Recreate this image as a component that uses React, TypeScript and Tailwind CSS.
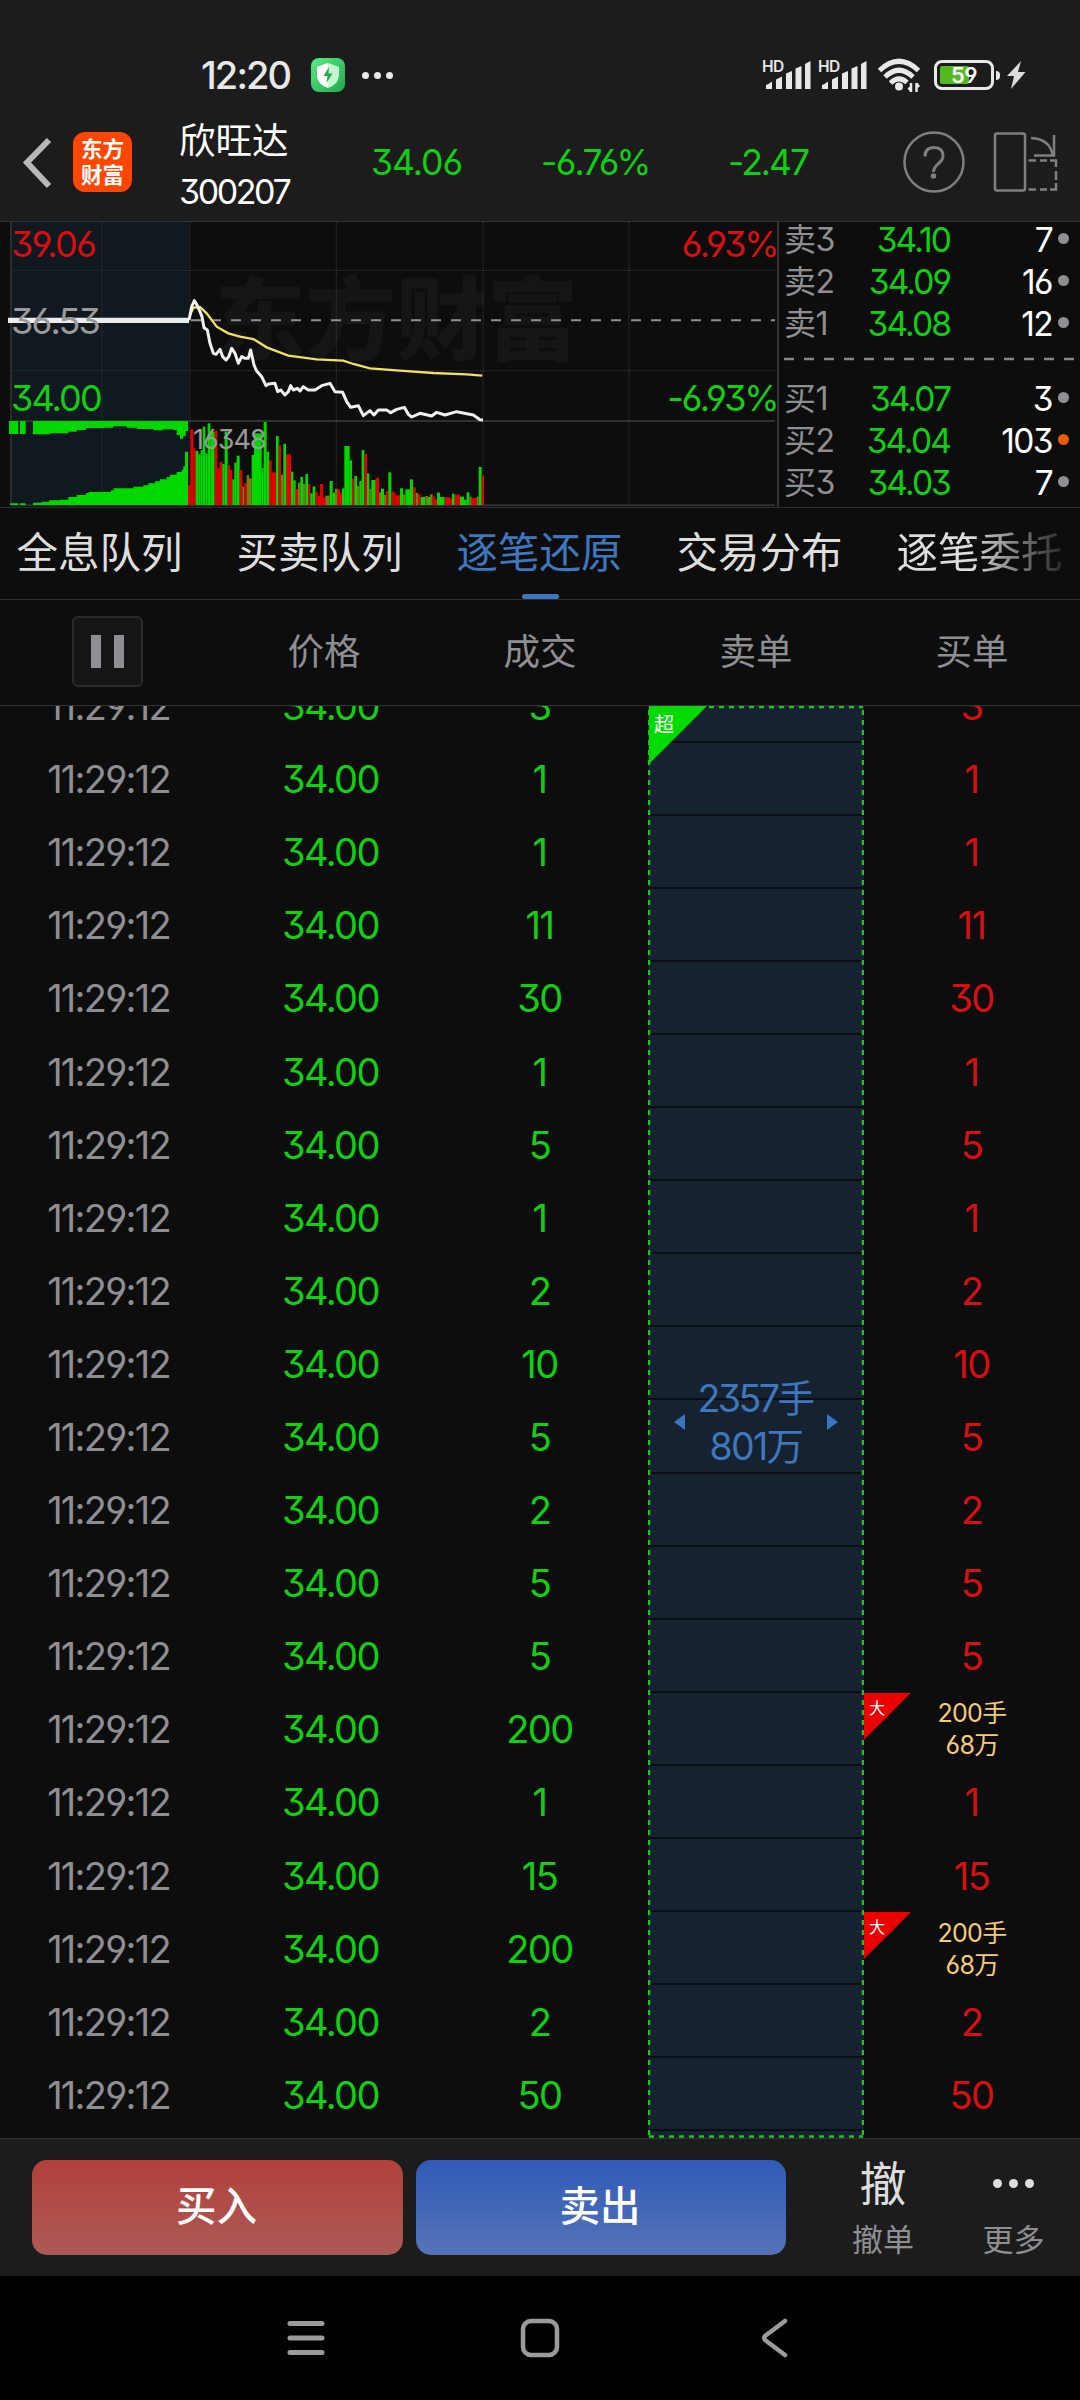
import type { ReactNode } from 'react';

type Quote = { label: string; price: string; volume: string; hot?: boolean };
type Trade = { volume: string; big?: boolean };

const asks: Quote[] = [
  { label: '卖3', price: '34.10', volume: '7' },
  { label: '卖2', price: '34.09', volume: '16' },
  { label: '卖1', price: '34.08', volume: '12' },
];

const bids: Quote[] = [
  { label: '买1', price: '34.07', volume: '3' },
  { label: '买2', price: '34.04', volume: '103', hot: true },
  { label: '买3', price: '34.03', volume: '7' },
];

const tabs = ['全息队列', '买卖队列', '逐笔还原', '交易分布', '逐笔委托'];

const trades: Trade[] = [
  { volume: '3' }, { volume: '1' }, { volume: '1' }, { volume: '11' }, { volume: '30' },
  { volume: '1' }, { volume: '5' }, { volume: '1' }, { volume: '2' }, { volume: '10' },
  { volume: '5' }, { volume: '2' }, { volume: '5' }, { volume: '5' }, { volume: '200', big: true },
  { volume: '1' }, { volume: '15' }, { volume: '200', big: true }, { volume: '2' }, { volume: '50' },
];

// Volume bars: [left, right, top, colour], colour g = up, r = down, b = mixed.
const bars: [number, number, number, 'g' | 'r' | 'b'][] = [
  [564, 571, 810, 'r'], [571, 580, 643, 'r'], [580, 587, 700, 'r'], [587, 595, 708, 'g'], [595, 602, 718, 'g'],
  [602, 608, 705, 'g'], [608, 616, 635, 'g'], [616, 623, 715, 'g'], [623, 631, 625, 'g'], [631, 644, 650, 'g'],
  [644, 652, 647, 'r'], [652, 659, 759, 'r'], [659, 667, 741, 'r'], [667, 674, 747, 'g'], [674, 683, 650, 'g'],
  [683, 690, 750, 'r'], [690, 697, 765, 'r'], [697, 703, 793, 'g'], [703, 710, 743, 'g'], [710, 719, 722, 'g'],
  [719, 727, 765, 'r'], [727, 733, 815, 'b'], [733, 740, 803, 'r'], [740, 747, 780, 'b'], [747, 755, 790, 'b'],
  [755, 762, 720, 'g'], [762, 785, 655, 'g'], [785, 791, 759, 'g'], [791, 800, 621, 'g'], [800, 807, 710, 'g'],
  [807, 815, 736, 'r'], [815, 828, 772, 'r'], [828, 836, 663, 'g'], [836, 843, 691, 'r'], [843, 850, 779, 'b'],
  [850, 858, 686, 'g'], [858, 873, 718, 'r'], [873, 880, 770, 'g'], [880, 887, 796, 'g'], [887, 894, 822, 'r'],
  [894, 901, 803, 'b'], [901, 909, 786, 'g'], [909, 916, 807, 'b'], [916, 924, 777, 'g'], [924, 931, 807, 'r'],
  [931, 938, 835, 'g'], [938, 946, 814, 'g'], [946, 953, 830, 'r'], [953, 960, 843, 'r'], [960, 969, 807, 'r'],
  [969, 976, 847, 'r'], [976, 989, 842, 'b'], [989, 998, 798, 'g'], [998, 1005, 833, 'g'], [1005, 1013, 821, 'b'],
  [1013, 1020, 823, 'r'], [1020, 1026, 835, 'r'], [1026, 1033, 820, 'g'], [1033, 1049, 693, 'g'], [1049, 1056, 736, 'g'],
  [1056, 1063, 791, 'r'], [1063, 1071, 783, 'g'], [1071, 1078, 813, 'b'], [1078, 1085, 798, 'g'], [1085, 1093, 705, 'g'],
  [1093, 1101, 717, 'r'], [1101, 1108, 775, 'g'], [1108, 1114, 821, 'b'], [1114, 1127, 795, 'g'], [1127, 1137, 788, 'r'],
  [1137, 1143, 832, 'b'], [1143, 1152, 821, 'g'], [1152, 1158, 840, 'b'], [1158, 1165, 828, 'r'], [1165, 1174, 772, 'g'],
  [1174, 1180, 828, 'r'], [1180, 1187, 833, 'r'], [1187, 1200, 841, 'r'], [1200, 1209, 820, 'g'], [1209, 1216, 838, 'b'],
  [1216, 1230, 823, 'g'], [1230, 1239, 793, 'g'], [1239, 1247, 817, 'r'], [1247, 1254, 834, 'b'], [1254, 1262, 838, 'r'],
  [1262, 1276, 846, 'g'], [1276, 1284, 843, 'b'], [1284, 1290, 846, 'g'], [1290, 1298, 838, 'b'], [1298, 1305, 844, 'r'],
  [1305, 1311, 853, 'r'], [1311, 1320, 833, 'g'], [1320, 1334, 846, 'g'], [1334, 1352, 847, 'r'], [1352, 1356, 851, 'r'],
  [1356, 1364, 836, 'g'], [1364, 1380, 839, 'r'], [1380, 1392, 845, 'g'], [1392, 1400, 854, 'g'], [1400, 1408, 832, 'g'],
  [1408, 1415, 845, 'b'], [1415, 1430, 849, 'r'], [1430, 1436, 845, 'b'], [1436, 1445, 756, 'g'], [1445, 1452, 781, 'r'],
];

const barFill = { g: '#00d800', r: '#e60000', b: '#7d7a10' };

function Signal() {
  return (
    <svg className="h-[32px] w-[47px] overflow-visible" viewBox="0 0 47 32" fill="#e8e8e8">
      <text x="-2" y="13" fontSize="15.5" fontWeight="600" letterSpacing="-0.6" fontFamily="Inter, sans-serif">HD</text>
      <path d="M2 30V26Q5 25 8 22.500V30ZM12 30V20.500L18 17.500V30ZM22 30V14.500L28 12V30ZM31.500 30V9.500L37.500 7V30ZM41 30V5L46.500 2V30Z" />
    </svg>
  );
}

function StatusBar() {
  return (
    <div className="flex h-[106px] items-end pr-[54px] pb-[14px] pl-[201px]">
      <span className="w-[110px] text-[38px] leading-[34px] font-medium tracking-[-1.900px] text-[#e8e8e8]">12:20</span>
      <svg className="h-[34px] w-[34px]" viewBox="0 0 34 34">
        <defs>
          <linearGradient id="shield" x1="0" y1="0" x2="1" y2="1">
            <stop offset="0" stopColor="#58ec84" />
            <stop offset="1" stopColor="#1fa850" />
          </linearGradient>
        </defs>
        <rect width="34" height="34" rx="8" fill="url(#shield)" />
        <path d="M17 5 28 9V17Q28 26 17 30Q6 26 6 17V9Z" fill="#c3f7d1" />
        <path d="M17 5 6 9V17Q6 26 17 30Z" fill="#fff" />
        <path d="M18 9 12.500 18H16.500L15.500 25 21.500 15.500H17.500Z" fill="#22a84f" />
      </svg>
      <div className="ml-[17px] flex h-[34px] items-center gap-[5px]">
        <i className="size-[7px] rounded-full bg-[#e8e8e8]" />
        <i className="size-[7px] rounded-full bg-[#e8e8e8]" />
        <i className="size-[7px] rounded-full bg-[#e8e8e8]" />
      </div>
      <div className="ml-auto flex h-[34px] items-center">
        <Signal />
        <span className="w-[9px]" />
        <Signal />
        <svg className="ml-[10px] h-[34px] w-[46px]" viewBox="0 0 46 34" fill="none" stroke="#e8e8e8" strokeWidth="5">
          <path d="M2.500 12.500Q22 -6 41.500 12.500" />
          <path d="M8 19Q22 5.500 36 19" />
          <path d="M13.500 25Q22 17 30 24.500" />
          <circle cx="22" cy="28.500" r="4" fill="#e8e8e8" stroke="none" />
          <path d="M34 25V34M39.500 25V34M31.500 29.500 34 33M42 29 39.500 25.500" strokeWidth="2.500" />
        </svg>
        <div className="ml-[11px] flex h-[30px] w-[60px] items-center justify-center rounded-[8px] border-[3px] border-[#e8e8e8]">
          <div className="relative h-[18px] w-[48px]">
            <div className="h-[18px] w-[29px] rounded-[2px] bg-[#55b81c]" />
            <span className="absolute inset-0 text-center text-[22px] leading-[18px] font-semibold tracking-[-0.500px] text-white">59</span>
          </div>
        </div>
        <span className="ml-[2px] h-[9px] w-[4px] rounded-r bg-[#e8e8e8]" />
        <svg className="ml-[7px] h-[30px] w-[19px]" viewBox="0 0 19 30" fill="#dcdcdc">
          <path d="M14 1 0 16H7L4 29 18.500 12H11Z" />
        </svg>
      </div>
    </div>
  );
}

function StockHeader() {
  return (
    <div className="flex h-[116px] items-center border-b-1 border-[#333] text-[35.500px] text-[#12cf12]">
      <svg className="ml-[22px] h-[54px] w-[31px]" viewBox="0 0 31 54" fill="none" stroke="#b8b8b8" strokeWidth="6" strokeLinecap="butt">
        <path d="M27 3 5 25.500 27 49" />
      </svg>
      <div className="-mt-[4px] ml-[20px] flex h-[60px] w-[59px] flex-col items-center justify-center rounded-[12px] bg-[#ff4600] text-[21.500px] leading-[26px] font-bold text-white">
        <span>东方</span>
        <span>财富</span>
      </div>
      <div className="mt-[6px] ml-[47px] flex w-[192px] flex-col text-white">
        <span className="text-[36.500px] leading-[50px]">欣旺达</span>
        <span className="text-[34px] leading-[51px] tracking-[-2.400px]">300207</span>
      </div>
      <span className="-mt-[2px] w-[170px] tracking-[-1px]">34.06</span>
      <span className="-mt-[2px] w-[187px] tracking-[-1.700px]">-6.76%</span>
      <span className="-mt-[2px] w-[175px] tracking-[-2px]">-2.47</span>
      <svg className="-mt-[3px] h-[62px] w-[62px]" viewBox="0 0 62 62" fill="none" stroke="#7f7f7f" strokeWidth="2.500">
        <circle cx="31" cy="31" r="29.500" />
        <path d="M22 25.500Q22 16.500 31 16.500Q40 16.500 40 25Q40 29 35 33Q30.500 37 30.500 41" strokeWidth="3" />
        <circle cx="30.500" cy="45" r="2.800" fill="#7f7f7f" stroke="none" />
      </svg>
      <svg className="-mt-[3px] ml-[28px] h-[62px] w-[66px]" viewBox="0 0 66 62" fill="none" stroke="#7f7f7f" strokeWidth="2.500">
        <rect x="2" y="2.500" width="30" height="57" rx="2" />
        <path d="M38 7Q57 8 59.500 24M61 4V24.500H41" />
        <path d="M35.500 29.500H43M47 29.500H54M57 29.500H63V36M63 40V49M63 52V58.500H57M54 58.500H47M43 58.500H35.500" />
      </svg>
    </div>
  );
}

function Chart() {
  return (
    <div className="relative h-[285px] w-[777px]">
      <svg className="h-[285px] w-[777px]" viewBox="0 21 2331 855" fill="none">
        <rect x="36" y="21" width="532" height="849" fill="#101820" />
        <text x="643" y="415" fontSize="273" fontWeight="900" fontFamily="'Noto Sans CJK SC', sans-serif" textLength="1092" fill="#151515">东方财富</text>
        <path d="M33 166H2325M33 467H2325M306 21V870M570 21V870M1009 21V870M1449 21V870M1887 21V870" stroke="#303030" strokeWidth="4" strokeDasharray="4 4" />
        <path d="M33 21V870" stroke="#2c2c2c" strokeWidth="6" />
        <path d="M33 618H2325M33 871H2325" stroke="#303030" strokeWidth="6" />
        <path d="M573 316H2325" stroke="#909090" strokeWidth="6" strokeDasharray="30 30" />
        <path d="M27 618H55V657H27ZM60 618H77V657H60ZM99 618V658H150V655H205V650H230V645H258V639H315V638H340V634H380V638H410V642H460V646H490V643H520V645H530V660H540V671H549V664H557V648H564V618Z" fill="#00d800" />
        <path d="M30 865H55V870H30ZM60 865H77V870H60ZM99 870V863H125V860H148V856H180V854H205V846H230V840H258V834H266V831H333V826H341V820H400V815H430V811H445V805H465V799H480V793H500V786H510V779H530V771H545V764H550V754H555V710H564V870Z" fill="#00d800" />
        {bars.map(([left, right, top, tone]) => (
          <rect key={left} x={left} y={top} width={right - left} height={870 - top} fill={barFill[tone]} />
        ))}
        <path d="M570 300 580 278 600 276 620 295 650 335 685 355 720 365 760 372 800 397 865 422 950 433 1030 437 1060 447 1110 460 1200 467 1300 474 1400 478 1447 482" stroke="#f0e060" strokeWidth="7" />
        <path d="M24 316H567" stroke="#ececec" strokeWidth="16" />
        <path d="M567 316 575 275 583 257 590 268 600 290 606 305 612 338 622 345 630 385 640 415 648 418 660 403 668 425 678 435 686 425 695 400 705 415 715 445 725 425 735 430 745 430 752 405 762 450 770 468 785 485 798 512 805 507 825 505 833 530 842 525 855 540 865 530 872 512 880 525 892 520 900 528 910 515 925 525 945 525 965 512 990 505 1005 530 1028 532 1040 560 1052 577 1075 572 1090 602 1110 587 1122 600 1135 585 1160 585 1172 593 1190 583 1213 577 1225 598 1235 606 1260 595 1295 603 1310 592 1335 600 1370 590 1420 600 1440 614 1449 615" stroke="#f0f0f0" strokeWidth="9" strokeLinejoin="round" />
      </svg>
      <div className="absolute inset-0 text-[36px] leading-[40px]">
        <div className="flex h-[78px] justify-between pt-[2px] pl-[11px] text-[#d80f0f]">
          <span className="tracking-[-1.700px]">39.06</span>
          <span className="tracking-[-2.500px]">6.93%</span>
        </div>
        <div className="flex h-[77px] pt-[1px] pl-[11px] text-[#999999]">
          <span className="tracking-[-1.900px]">36.53</span>
        </div>
        <div className="flex h-[48px] justify-between pt-[1px] pl-[11px] text-[#12cf12]">
          <span className="tracking-[-1.900px]">34.00</span>
          <span className="tracking-[-2.500px]">-6.93%</span>
        </div>
        <div className="pl-[193px] text-[27px] leading-[30px] tracking-[-1px] text-[#9a9a9a]">16348</div>
      </div>
    </div>
  );
}

function QuoteRow({ label, price, volume, hot }: Quote) {
  return (
    <div className="flex h-[42px] items-center pr-[11px] pl-[5px] text-[33.500px]">
      <span className="w-[70px] text-[32px] tracking-[-0.500px] text-[#8e8e93]">{label}</span>
      <span className="w-[96px] text-right tracking-[-1.900px] text-[#12cf12]">{price}</span>
      <span className="flex-1 text-right tracking-[-1.600px] text-white">{volume}</span>
      <i className={hot ? 'mb-[3px] ml-[6px] size-[11px] rounded-full bg-[#e65c08]' : 'mb-[3px] ml-[6px] size-[11px] rounded-full bg-[#8e8e93]'} />
    </div>
  );
}

function OrderBook() {
  return (
    <div className="flex h-[285px] flex-1 flex-col border-l-2 border-[#333]">
      <div className="-mt-[3px]">
        {asks.map((q) => <QuoteRow key={q.label} {...q} />)}
      </div>
      <svg className="mt-[12px] mb-[17px] ml-[5px] h-[4px] w-[292px]" viewBox="0 0 292 4">
        <path d="M0 2H292" stroke="#858585" strokeWidth="2.500" strokeDasharray="10 10" />
      </svg>
      {bids.map((q) => <QuoteRow key={q.label} {...q} />)}
    </div>
  );
}

function Tabs() {
  return (
    <div className="flex h-[93px] justify-center overflow-hidden border-y-1 border-[#2d2d2d] text-[41.500px] text-[#dedede]">
      {tabs.map((tab, i) => (
        <div key={tab} className="relative flex w-[220px] shrink-0 items-center justify-center">
          {i === 2 && <span className="-ml-[1px] text-[#3d77bd]">{tab}</span>}
          {i === 4 && <span className="-ml-[1px] bg-linear-to-r from-[#dedede] from-45% to-[#2a2a2a] bg-clip-text text-transparent">{tab}</span>}
          {i !== 2 && i !== 4 && <span className="-ml-[1px]">{tab}</span>}
          {i === 2 && <i className="absolute bottom-0 h-[5px] w-[37px] rounded-full bg-[#3d77bd]" />}
        </div>
      ))}
    </div>
  );
}

function TableHead() {
  return (
    <div className="grid h-[106px] grid-cols-5 items-center justify-items-center border-b-1 border-[#333] text-[36.500px] text-[#8e8e93]">
      <div className="-mt-[2px] mr-[2px] flex h-[71px] w-[71px] items-center justify-center gap-[13px] rounded-[6px] border-2 border-[#2a2a2a] bg-[#151515]">
        <i className="h-[33px] w-[10px] bg-[#8e8e93]" />
        <i className="h-[33px] w-[10px] bg-[#8e8e93]" />
      </div>
      <span>价格</span>
      <span>成交</span>
      <span>卖单</span>
      <span>买单</span>
    </div>
  );
}

function CornerMark({ children }: { children: ReactNode }) {
  return (
    <div className="absolute top-0 left-0 h-[47px] w-[47px] bg-[#ec0000] pt-[6px] pl-[5px] text-[16px] leading-[18px] text-white [clip-path:polygon(0_0,100%_0,0_100%)]">
      {children}
    </div>
  );
}

function TradeRow({ volume, big }: Trade) {
  return (
    <div className="grid h-[73.100px] shrink-0 grid-cols-5 items-center justify-items-center">
      <span className="pl-[1px] tracking-[-1.750px] text-[#8e8e93]">11:29:12</span>
      <span className="pl-[13px] tracking-[-1.600px] text-[#12cf12]">34.00</span>
      <span className="pr-[1px] tracking-[-1.500px] text-[#12cf12]">{volume}</span>
      <div className="h-full w-full border-b-2 border-[#0a0f14] bg-[#162230]" />
      <div className="relative flex h-full w-full flex-col items-center justify-center">
        {big ? (
          <>
            <CornerMark>大</CornerMark>
            <span className="text-[25px] leading-[32px] tracking-[-0.700px] text-[#f6cb78]">{volume}手</span>
            <span className="text-[25px] leading-[32px] tracking-[-0.700px] text-[#f6cb78]">68万</span>
          </>
        ) : (
          <span className="pr-[1px] tracking-[-1.500px] text-[#d80f0f]">{volume}</span>
        )}
      </div>
    </div>
  );
}

function SellOrderOverlay() {
  return (
    <div className="absolute top-0 left-[648px] h-[1432px] w-[216px]">
      <div className="absolute top-0 left-[1px] h-[58px] w-[58px] bg-[#00dc00] pt-[8px] pl-[5px] text-[20px] leading-[22px] text-white [clip-path:polygon(0_0,100%_0,0_100%)]">超</div>
      <svg className="absolute inset-0 h-[1432px] w-[216px]" viewBox="0 0 216 1432" fill="none" stroke="#1fc41f" strokeWidth="2.500" strokeDasharray="5 5">
        <path d="M1 1H215M1 4V1430M215 4V1430M1 1430.500H215" />
      </svg>
      <div className="flex h-full flex-col items-center pt-[669px] text-[37.500px] leading-[48px] text-[#3d77bd]">
        <span className="pr-[2px] tracking-[-2.500px]">2357手</span>
        <span className="tracking-[-1.700px]">801万</span>
      </div>
      <svg className="absolute top-[707px] left-[26px] h-[18px] w-[164px]" viewBox="0 0 164 18" fill="#3876c4">
        <path d="M0 9 11 1V17ZM164 9 153 1V17Z" />
      </svg>
    </div>
  );
}

function TradeList() {
  return (
    <div className="relative flex h-[1432px] flex-col overflow-hidden text-[38px] leading-[48px]">
      <div className="-mt-[36.500px] flex flex-col">
        {trades.map((t, i) => <TradeRow key={i} {...t} />)}
        <div className="ml-[648px] h-[10px] w-[216px] bg-[#162230]" />
      </div>
      <SellOrderOverlay />
    </div>
  );
}

function ActionBar() {
  return (
    <div className="flex h-[138px] items-center border-t-1 border-[#333] bg-[#1c1c1c] pl-[32px] text-[40.500px] text-[#dedede]">
      <button className="h-[95px] w-[371px] rounded-[15px] bg-linear-to-b from-[#b1403b] to-[#ac5955] pr-[2px] font-medium text-white">买入</button>
      <button className="ml-[13px] h-[95px] w-[370px] rounded-[15px] bg-linear-to-b from-[#2f5ab6] to-[#5573b8] pr-[2px] font-medium text-white">卖出</button>
      <div className="mt-[5px] ml-[32px] flex w-[130px] flex-col items-center">
        <span className="text-[47px] leading-[50px] font-normal">撤</span>
        <span className="mt-[9px] text-[31px] leading-[44px] text-[#8e8e93]">撤单</span>
      </div>
      <div className="mt-[5px] flex w-[131px] flex-col items-center">
        <div className="flex h-[50px] items-center gap-[7px]">
          <i className="size-[9px] rounded-full bg-[#dedede]" />
          <i className="size-[9px] rounded-full bg-[#dedede]" />
          <i className="size-[9px] rounded-full bg-[#dedede]" />
        </div>
        <span className="mt-[9px] text-[31px] leading-[44px] text-[#8e8e93]">更多</span>
      </div>
    </div>
  );
}

function NavBar() {
  return (
    <div className="flex h-[124px] items-center justify-center gap-[195px] bg-black">
      <svg className="h-[40px] w-[38px]" viewBox="0 0 38 40" fill="none" stroke="#9b9b9b" strokeWidth="5" strokeLinecap="round">
        <path d="M3 5.500H35M3 20H35M3 34.500H35" />
      </svg>
      <svg className="h-[40px] w-[40px]" viewBox="0 0 40 40" fill="none" stroke="#9b9b9b" strokeWidth="4.500">
        <rect x="3" y="3" width="34" height="34" rx="8" />
      </svg>
      <svg className="h-[40px] w-[38px]" viewBox="0 0 38 40" fill="none" stroke="#9b9b9b" strokeWidth="4.500" strokeLinecap="round" strokeLinejoin="round">
        <path d="M30 3 10 18Q8.500 20 10 22L30 37" />
      </svg>
    </div>
  );
}

export default function App() {
  return (
    <div className="flex h-[2400px] w-[1080px] flex-col overflow-hidden bg-[#0d0d0d] font-['Inter','Noto_Sans_CJK_SC',sans-serif] font-[375] whitespace-nowrap [font-feature-settings:'cv03','cv04','cv09']">
      <div className="bg-[#1c1c1c]">
        <StatusBar />
        <StockHeader />
      </div>
      <div className="flex">
        <Chart />
        <OrderBook />
      </div>
      <Tabs />
      <TableHead />
      <TradeList />
      <ActionBar />
      <NavBar />
    </div>
  );
}
